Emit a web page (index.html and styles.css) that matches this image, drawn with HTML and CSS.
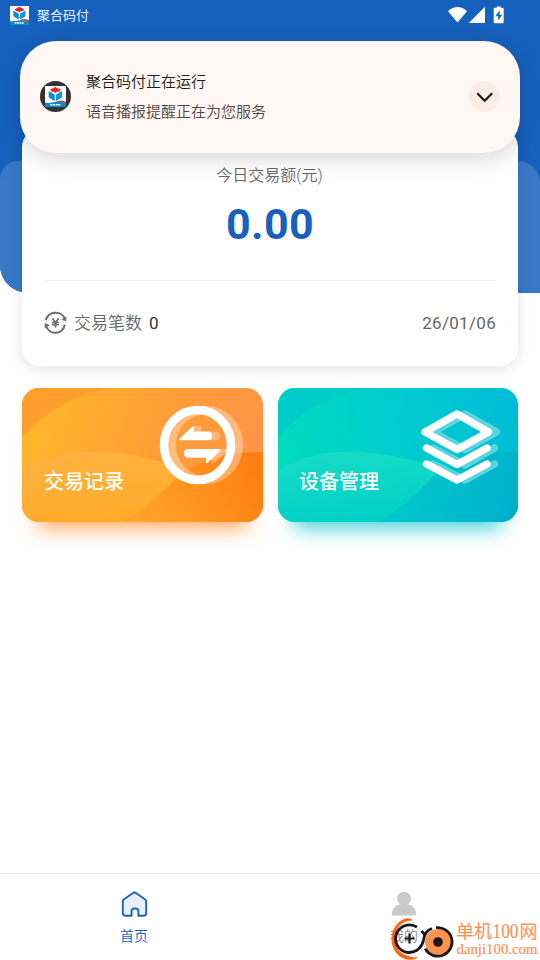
FILE: index.html
```html
<!DOCTYPE html>
<html lang="zh-CN">
<head>
<meta charset="utf-8">
<title>聚合码付</title>
<link rel="stylesheet" href="styles.css">
</head>
<body>
<svg class="defs" width="0" height="0" aria-hidden="true">
  <symbol id="app-logo" viewBox="0 0 20 20">
    <path fill="#fff" d="M0 0h20v20H0z"/>
    <path fill="#e5262b" d="M4.800 3.400 7.500 2.200 9.700.9l2.500 1.300 3 1.200-2.200 2.200-1.800-.2-1.300 1.400-1.500-1.400-1.700.2z"/>
    <path fill="#168bc9" d="m3.500 4.800 5.800 3.300v6.200l-4.700-2.600c-.8-.5-1.100-1.200-1.100-2z"/>
    <path fill="#0f9bd8" d="m16.300 4.800-5.800 3.300v6.200l4.700-2.600c.8-.5 1.100-1.200 1.100-2z"/>
    <path fill="#e63b3b" d="M10 15.300c3.500-1.900 7-2 10-.2v2z"/>
    <path fill="#128ac8" d="M0 15.700c4.500 1.300 8-.7 12-.6 3 0 5 .9 8 .9v4H0z"/>
    <path fill="none" stroke="#fff" stroke-width="1.500" stroke-dasharray="1.900 .5 2.300 .5" d="M5 17.900h9.500"/>
  </symbol>
</svg>
<div class="app">
  <main class="stage">
    <div class="hero"><div class="hero-panel"></div></div>
    <div class="content">
      <header class="status">
        <svg class="status-logo" viewBox="0 0 20 20"><use href="#app-logo"/></svg>
        <span class="status-name">聚合码付</span>
        <svg class="status-icons" width="60" height="20" viewBox="0 0 60 20" fill="#fff">
          <path d="M0 5.200Q9.500-3 19 5.200L9.500 16.500z"/>
          <path d="M20.800 17 37 .7V17z"/>
          <path d="M48.700.500h4v1.200h1.800q1.200 0 1.200 1.200V16q0 1.200-1.200 1.200h-7.600q-1.200 0-1.200-1.200V2.900q0-1.200 1.200-1.200h1.800z"/>
          <path fill="#1661bd" d="m51.600 4.300-4.200 5.900h2.800v4.300l4-5.700h-2.600z"/>
        </svg>
      </header>
      <section class="summary">
        <div class="amount-label">今日交易额(元)</div>
        <div class="amount">0.00</div>
        <div class="summary-row">
          <svg class="yen" width="24" height="24" viewBox="0 0 24 24" fill="none" stroke="#6e6e6e" stroke-width="2">
            <path d="M1.800 9.200C4.300-.6 18.500-.8 21 8.400M20.800 13.500C19 24.300 4.500 24.800 1.800 14"/>
            <path fill="#6e6e6e" stroke="none" d="m22.300 5.500v4.800l-5-1.600zM.7 17.300v-5.200l5 2z"/>
            <path stroke-width="1.600" d="m8.300 7.300 3.200 4.300 3.200-4.300M11.500 11.400v5M8.100 11.600h6.800M8.100 13.800h6.800"/>
          </svg>
          <span class="count-label">交易笔数</span>
          <span class="count">0</span>
          <time class="date">26/01/06</time>
        </div>
      </section>
      <nav class="tiles">
        <a class="tile tile-orange">
          <svg class="tile-art" viewBox="0 0 241 134" preserveAspectRatio="none">
            <defs>
              <linearGradient id="o1" x1="0" x2="1" y1=".3" y2=".5"><stop stop-color="#ffb729"/><stop offset=".6" stop-color="#ff9c39"/><stop offset="1" stop-color="#ff9548"/></linearGradient>
              <linearGradient id="o2" x1="0" x2="1" y1=".7" y2=".5"><stop stop-color="#ffb32c"/><stop offset=".5" stop-color="#ffa027"/><stop offset="1" stop-color="#ff8012"/></linearGradient>
              <linearGradient id="o3" x1=".4" x2=".6" y1="0" y2="1"><stop stop-color="#ffb23f"/><stop offset="1" stop-color="#ffab29"/></linearGradient>
            </defs>
            <path fill="url(#o1)" d="M0 0h241v134H0z"/>
            <path fill="#ff9d2d" d="M0 0h95C59 2 25 22 0 49z"/>
            <path fill="url(#o2)" d="M0 82c45-25 90-22 143-8l19 9c24-13 52-20 79-19v70H0z"/>
            <path fill="url(#o3)" d="M0 82c45-25 87-21 138-9l25 9c-17 14-34 38-64 52H0z"/>
            <ellipse cx="183" cy="57" rx="33.500" ry="35" fill="none" stroke="#fff" stroke-opacity=".33" stroke-width="9"/>
            <path fill="#fff" fill-opacity=".3" d="m164 52 8-14h7v5.500h14q5 0 5 4.400t-5 4.400zM174 61h33l-14 14h-4v-6h-15q-4 0-4-4t4-4z"/>
            <ellipse cx="175.500" cy="57" rx="33.500" ry="35" fill="none" stroke="#fff" stroke-width="8.600"/>
            <path fill="#fff" d="M158 52.300q-1.800-.6-.2-2L170.500 38.600h1.300v4.900h13.500q4.800 0 4.800 4.400t-4.800 4.400zM166.700 61h31q1.800.4.500 2L185.300 75H184v-5.200h-17.300q-4.800 0-4.800-4.400t4.800-4.400z"/>
          </svg>
          <span class="tile-text">交易记录</span>
        </a>
        <a class="tile tile-teal">
          <svg class="tile-art" viewBox="0 0 240 134" preserveAspectRatio="none">
            <defs>
              <linearGradient id="t1" x1="0" x2="1" y1=".5" y2=".4"><stop stop-color="#00dcbc"/><stop offset=".55" stop-color="#00cbd0"/><stop offset="1" stop-color="#00bdd6"/></linearGradient>
              <linearGradient id="t2" x1="0" x2="1" y1=".5" y2=".6"><stop stop-color="#00d8c0"/><stop offset=".5" stop-color="#00c7cb"/><stop offset="1" stop-color="#00b1cc"/></linearGradient>
              <linearGradient id="t3" x1=".4" x2=".6" y1="0" y2="1"><stop stop-color="#16dcc6"/><stop offset="1" stop-color="#00d0c7"/></linearGradient>
            </defs>
            <path fill="url(#t1)" d="M0 0h240v134H0z"/>
            <path fill="#00cdca" d="M0 0h95C59 2 25 22 0 49z"/>
            <path fill="url(#t2)" d="M0 82c45-25 90-22 143-8l19 9c24-13 51-20 78-19v70H0z"/>
            <path fill="url(#t3)" d="M0 82c45-25 87-21 138-9l25 9c-17 14-34 38-64 52H0z"/>
            <g fill="none" stroke-width="7.400" stroke-linecap="round" stroke-linejoin="round">
              <g stroke="#58d6e2"><path d="m187 26 31.500 18-31.500 17.500-32-17.500zM155 60l32 17 29.500-17M155 76l32 16 29.500-16"/></g>
              <g stroke="#fff"><path d="m179 26 31.500 18-31.500 17.500-32-17.500zM148.500 60l30.500 16.500L209 60M148.500 76l30.500 16L209 76"/></g>
            </g>
          </svg>
          <span class="tile-text">设备管理</span>
        </a>
      </nav>
    </div>
  </main>
  <footer class="tabs">
    <a class="tab tab-active">
      <svg width="28" height="28" viewBox="0 0 28 28"><path fill="#e8eff8" stroke="#1b64be" stroke-width="1.900" stroke-linejoin="round" d="M2.800 11.600q0-1.200 1-2L13 3q1.500-1.200 3 0l9.200 6.600q1 .8 1 2V23q0 2.800-2.800 2.800h-5v-4.600q0-2.700-2.700-2.700h-1.400q-2.700 0-2.700 2.700v4.600H5.600q-2.800 0-2.800-2.800z"/></svg>
      <span>首页</span>
    </a>
    <a class="tab">
      <svg width="28" height="28" viewBox="0 0 28 28" fill="#c9c9c9"><ellipse cx="14" cy="8.500" rx="7" ry="6.800"/><path d="M1.700 25.500C2 17 7 13.800 14 13.800S26 17 26.300 25.500z"/></svg>
      <span>我的</span>
    </a>
  </footer>
  <aside class="notice">
    <span class="notice-avatar"><svg viewBox="0 0 20 20"><use href="#app-logo"/></svg></span>
    <div class="notice-body">
      <div class="notice-title">聚合码付正在运行</div>
      <div class="notice-text">语音播报提醒正在为您服务</div>
    </div>
    <span class="notice-toggle"><svg width="18" height="12" viewBox="0 0 18 12" fill="none" stroke="#1c1715" stroke-width="2.100"><path d="m1.200 2.300 7.500 7.500 7.500-7.500"/></svg></span>
  </aside>
  <div class="watermark">
    <svg width="150" height="45" viewBox="390 915 150 45">
      <g fill="none" stroke-width="2.800">
        <path fill="#ff6812" d="M412.500 920.500c-1-2.500-5.500-3-9-1.200C397 922 391.500 930 391.500 939c0 11 8 20.500 18.500 20.700 4 0 6.500-1 7.500-2.700-3 .8-6 .3-8-.8-9-2-14.800-8.200-14.800-17.200 0-9.500 6-17 14.300-18.300z"/>
        <path stroke="#1c1718" d="M417 927.200a13.800 13.800 0 1 0 1.500 21.800c3-2.800 4.500-6 5-9 .6-6 4-10 8.500-11.500M421.500 931l4 4.500"/>
        <path stroke="#1c1718" stroke-width="2.200" d="M404.500 938.500h10M409.500 933.500v10"/>
        <circle cx="438" cy="942" r="13" fill="#ff924e"/>
        <path stroke="#1c1718" d="M436 927.700a14.300 14.300 0 1 1-10.800 21"/>
        <circle cx="438" cy="942" r="4.800" fill="#1c1718"/>
      </g>
      <g class="watermark-text">
        <text x="456" y="937.500" font-size="18">单机</text>
        <text x="492.500" y="937.500" font-size="20.500" textLength="26" lengthAdjust="spacingAndGlyphs">100</text>
        <text x="519.500" y="937.500" font-size="18">网</text>
        <text x="456.500" y="953.500" font-size="15" textLength="81" lengthAdjust="spacingAndGlyphs">danji100.com</text>
      </g>
    </svg>
  </div>
</div>
</body>
</html>
```
FILE: styles.css
```css
* {
  box-sizing: border-box;
}

body {
  margin: 0;
  font-family: Roboto, "Noto Sans CJK SC", sans-serif;
  font-weight: 350;
  background: #fff;
}

.defs {
  position: absolute;
}

.app {
  position: relative;
  display: flex;
  flex-direction: column;
  width: 540px;
  height: 960px;
  overflow: hidden;
}

/* The blue backdrop and the content share one grid cell. */
.stage {
  flex: 1;
  display: grid;
  grid-template: 1fr / 540px;
}

.hero,
.content {
  grid-area: 1 / 1;
}

.hero {
  display: flex;
  align-items: flex-end;
  height: 293px;
  background: #1661bd;
  border-bottom-left-radius: 28px;
  overflow: hidden;
}

.hero-panel {
  width: 100%;
  height: 132px;
  background: #3978c7;
  border-radius: 18px 22px 0 0;
}

.status {
  display: flex;
  align-items: center;
  height: 31px;
  padding: 0 34px 0 10px;
  color: #fff;
}

.status-logo {
  width: 19px;
  height: 19px;
}

.status-name {
  margin-left: 8px;
  font-size: 13px;
  line-height: 20px;
}

.status-icons {
  margin: 0 -2px 0 auto;
}

.summary {
  height: 237px;
  margin: 98px 22px 0;
  padding: 32px 22px 0;
  border-radius: 18px;
  background: #fff;
  box-shadow: 0 2px 14px rgba(0, 0, 0, .12);
}

.amount-label {
  height: 29px;
  padding-right: 1px;
  color: #666;
  font-size: 16px;
  line-height: 30px;
  text-align: center;
}

.amount {
  height: 91px;
  border-bottom: 1px solid #f0f0f0;
  color: #1661bd;
  font-size: 43px;
  font-weight: 700;
  line-height: 68px;
  letter-spacing: .4px;
  text-align: center;
}

.summary-row {
  display: flex;
  align-items: center;
  height: 84px;
  color: #666;
  font-size: 17px;
}

.count-label {
  margin: -3px 0 0 6px;
}

.count {
  margin-left: 7px;
  color: #333;
  font-weight: 400;
}

.date {
  margin-left: auto;
  font-weight: 400;
  letter-spacing: .3px;
}

.tiles {
  display: grid;
  grid-template-columns: 241px 240px;
  gap: 15px;
  margin: 22px 22px 0;
}

.tile {
  display: grid;
  height: 134px;
  border-radius: 17px;
}

.tile-orange {
  box-shadow: 0 22px 20px -16px rgba(255, 145, 50, .8);
}

.tile-teal {
  box-shadow: 0 22px 20px -16px rgba(0, 195, 205, .75);
}

.tile-art,
.tile-text {
  grid-area: 1 / 1;
}

.tile-art {
  width: 100%;
  height: 134px;
  border-radius: 17px;
}

.tile-text {
  z-index: 1;
  padding: 79px 22px 0;
  color: #fff;
  font-size: 20px;
  font-weight: 500;
  line-height: 30px;
}

.tile-teal .tile-text {
  padding-left: 21px;
}

.tabs {
  display: grid;
  grid-template-columns: 1fr 1fr;
  height: 87px;
  border-top: 1px solid #e6e6e6;
  background: #fff;
}

.tab {
  display: flex;
  flex-direction: column;
  align-items: center;
  padding: 16px 2px 0 0;
  color: #888;
  font-size: 14px;
  line-height: 20px;
}

.tab span {
  margin-top: 8px;
}

.tab-active {
  color: #1661bd;
}

.notice {
  position: absolute;
  top: 41px;
  left: 20px;
  display: flex;
  align-items: center;
  width: 500px;
  height: 112px;
  padding: 0 20px;
  border-radius: 36px;
  background: #fff7f4;
  box-shadow: 0 4px 24px rgba(0, 0, 0, .18);
}

.notice-avatar,
.notice-toggle {
  display: flex;
  align-items: center;
  justify-content: center;
  width: 31px;
  height: 31px;
  margin-top: -1px;
  border-radius: 50%;
}

.notice-avatar {
  background: #333;
}

.notice-avatar svg {
  width: 21px;
  height: 21px;
}

.notice-body {
  flex: 1;
  margin-left: 15px;
  font-size: 15px;
  line-height: 30px;
}

.notice-title {
  color: #221a17;
}

.notice-text {
  color: #524440;
}

.notice-toggle {
  background: #fbece7;
}

.watermark {
  position: absolute;
  left: 390px;
  top: 915px;
  height: 45px;
}

.watermark-text {
  fill: #ff9054;
  stroke: #ff9054;
  stroke-width: .2px;
  font-family: "Liberation Serif", "Noto Sans CJK SC", serif;
}
```
